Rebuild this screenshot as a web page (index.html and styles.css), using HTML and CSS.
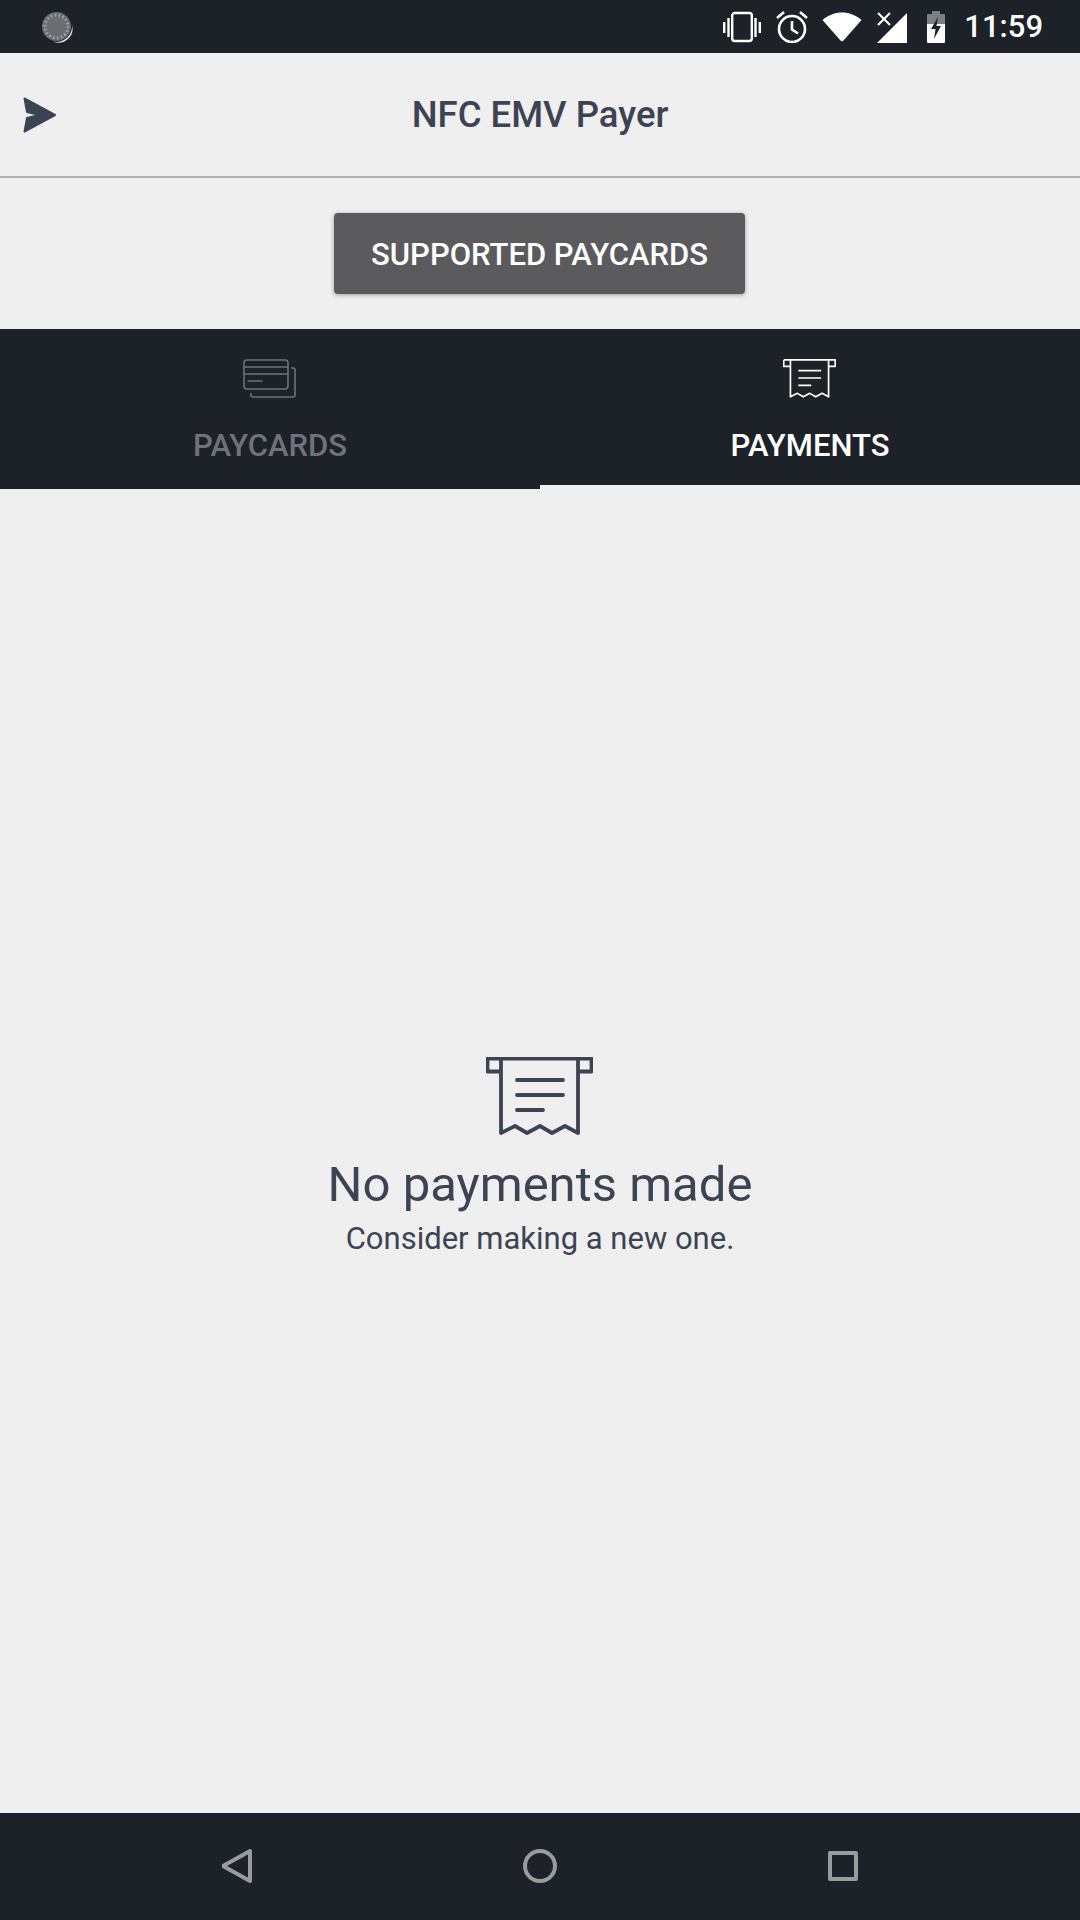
FILE: index.html
```html
<!DOCTYPE html>
<html lang="en">
<head>
  <meta charset="UTF-8">
  <meta name="viewport" content="width=device-width, initial-scale=1.0">
  <title>NFC EMV Payer</title>
  <link rel="stylesheet" href="styles.css">
</head>

<body>
  <div class="status-bar">
    <svg class="spinner" width="32" height="32" viewBox="0 0 32 32">
      <circle cx="15.5" cy="15.5" r="14.5" fill="#6b6d70"/>
      <circle cx="15.5" cy="15.5" r="11.5" fill="none" stroke="#a3a4a6" stroke-width="3" stroke-dasharray="1.6 2.4"/>
      <path d="M12 30.500 A 15.500 15.500 0 0 0 31 14 A 14 14 0 0 1 12 30.500 Z" fill="#e6e6e6"/>
    </svg>
    <div class="status-icons">
      <svg width="38" height="32" viewBox="0 0 38 32" fill="none" stroke="#fff" stroke-width="2.4">
        <rect x="9.200" y="2" width="19.600" height="28" rx="2.500"/>
        <path d="M1.200 11v11M5.500 7v19M32.500 7v19M36.800 11v11"/>
      </svg>
      <svg class="gap-alarm" width="32" height="32" viewBox="0 0 32 32" fill="none" stroke="#fff" stroke-width="2.6">
        <circle cx="16" cy="18" r="13"/>
        <path d="M16 10v8.500l6 4M1 7l7-6M31 7l-7-6"/>
      </svg>
      <svg class="gap-wifi" width="40" height="30" viewBox="0 0 40 30">
        <path d="M0.500 8 C12 -2 28 -2 39.500 8 L21.500 28.500 Q20 30 18.500 28.500 Z" fill="#fff"/>
      </svg>
      <svg class="gap-signal" width="30" height="32" viewBox="0 0 30 32">
        <path d="M30 2 V32 H0 Z" fill="#fff"/>
        <path d="M1 2l12 12M13 2L1 14" stroke="#fff" stroke-width="2" fill="none"/>
      </svg>
      <svg class="gap-battery" width="18" height="32" viewBox="0 0 18 32">
        <path d="M5 0h8v3h4a1 1 0 0 1 1 1v12H0V4a1 1 0 0 1 1-1h4Z" fill="#7d7f82"/>
        <path d="M0 13h18v18a1 1 0 0 1-1 1H1a1 1 0 0 1-1-1Z" fill="#fff"/>
        <path d="M11 6L4 18h4.500L7 28l7-13H9.500Z" fill="#1d2229"/>
      </svg>
      <span class="clock">11:59</span>
    </div>
  </div>

  <header class="app-header">
    <svg class="app-logo" width="34" height="36" viewBox="0 0 34 36">
      <path d="M1.500 1.500L32 18 1.500 34.500 4 21 16 18 4 15Z" fill="#3c4353" stroke="#3c4353" stroke-width="2" stroke-linejoin="round"/>
    </svg>
    <h1 class="app-title">NFC EMV Payer</h1>
  </header>

  <div class="action-row">
    <button class="btn-supported">SUPPORTED PAYCARDS</button>
  </div>

  <nav class="tabs">
    <div class="tab">
      <svg class="tab-icon" width="53" height="39" viewBox="0 0 53 39" fill="none" stroke="#6f7279" stroke-width="1.600">
        <rect x="1" y="1" width="44" height="29" rx="3"/>
        <path d="M1 8h44M1 15h44M4.500 22h15M48 9h2a2 2 0 0 1 2 2v25a2 2 0 0 1-2 2H10a2 2 0 0 1-2-2v-2"/>
      </svg>
      <span class="tab-label">PAYCARDS</span>
    </div>
    <div class="tab tab-active">
      <svg class="tab-icon" width="53" height="39" viewBox="0 0 107 78" fill="none" stroke="#fff" stroke-width="3.400" stroke-linejoin="round">
        <path d="M1.500 1.500h104v13h-13M15 14.500H1.500v-13M15 1.500V76l14-7 12 7 13-7 12 7 13-7 13 7V1.500"/>
        <path d="M31 23h46M31 38h46M31 53h26"/>
      </svg>
      <span class="tab-label">PAYMENTS</span>
    </div>
  </nav>

  <main class="empty-state">
    <svg class="empty-icon" width="107" height="78" viewBox="0 0 107 78" fill="none" stroke="#3c4353" stroke-width="3.800" stroke-linejoin="round" stroke-linecap="round">
      <path d="M1.500 1.500h104v13h-13M15 14.500H1.500v-13M15 1.500V76l14-7 12 7 13-7 12 7 13-7 13 7V1.500"/>
      <path d="M31 23h46M31 38h46M31 53h26"/>
    </svg>
    <h2 class="empty-title">No payments made</h2>
    <p class="empty-text">Consider making a new one.</p>
  </main>

  <div class="nav-bar">
    <svg width="30" height="34" viewBox="0 0 30 34" fill="none" stroke="#9a9b9d" stroke-width="4" stroke-linejoin="round">
      <path d="M28 2V32L1 17Z"/>
    </svg>
    <svg width="34" height="34" viewBox="0 0 34 34" fill="none" stroke="#9a9b9d" stroke-width="4">
      <circle cx="17" cy="17" r="15"/>
    </svg>
    <svg width="30" height="30" viewBox="0 0 30 30" fill="none" stroke="#9a9b9d" stroke-width="4" stroke-linejoin="round">
      <rect x="2" y="2" width="26" height="26"/>
    </svg>
  </div>
</body>
</html>
```

FILE: styles.css
```css
* {
  box-sizing: border-box;
}

html, body {
  height: 100%;
}

body {
  display: flex;
  flex-direction: column;
  height: 1920px;
  margin: 0;
  background-color: #efefef;
  font-family: Roboto, sans-serif;
  overflow: hidden;
}

svg {
  display: block;
  flex-shrink: 0;
}

.status-bar {
  display: flex;
  align-items: center;
  justify-content: space-between;
  height: 53px;
  padding: 0 37px 0 41px;
  background-color: #1d2229;
}

.status-icons {
  display: flex;
  align-items: center;
}

.gap-alarm {
  margin-left: 15px;
}

.gap-wifi {
  margin-left: 14px;
}

.gap-signal {
  margin-left: 15px;
}

.gap-battery {
  margin-left: 20px;
}

.clock {
  margin-left: 19px;
  color: #fff;
  font-size: 31px;
  font-weight: 500;
}

.app-header {
  display: grid;
  grid-template-columns: 34px 1fr 34px;
  align-items: center;
  height: 125px;
  padding: 0 23px;
  border-bottom: 2px solid #b0b0b0;
}

.app-title {
  margin: 0;
  color: #3c4353;
  font-size: 36.5px;
  font-weight: 500;
  text-align: center;
}

.action-row {
  display: flex;
  justify-content: center;
  height: 151px;
  padding-top: 35px;
}

.btn-supported {
  width: 411px;
  height: 81px;
  margin-right: 1px;
  padding: 2px 0 0;
  border: none;
  border-radius: 4px;
  background-color: #5b5b5d;
  box-shadow: 0 1px 4px rgba(0, 0, 0, 0.35);
  color: #fff;
  font-family: Roboto, sans-serif;
  font-size: 31px;
  font-weight: 500;
}

.tabs {
  display: flex;
  height: 160px;
}

.tab {
  display: flex;
  flex: 1;
  flex-direction: column;
  align-items: center;
  padding-top: 30px;
  background-color: #1d2229;
  color: #6f7279;
}

.tab-active {
  border-bottom: 4px solid #efefef;
  color: #fff;
}

.tab-icon {
  margin-right: 2px;
}

.tab-label {
  margin-top: 29px;
  font-size: 31px;
  font-weight: 500;
}

.empty-state {
  display: flex;
  flex: 1;
  flex-direction: column;
  align-items: center;
  justify-content: center;
  padding-top: 12px;
  color: #3c4353;
}

.empty-icon {
  margin-right: 2px;
}

.empty-title {
  margin: 21px 0 0;
  font-size: 49px;
  font-weight: 400;
}

.empty-text {
  margin: 7px 0 0;
  font-size: 31px;
}

.nav-bar {
  display: flex;
  align-items: center;
  justify-content: center;
  gap: 271px;
  height: 107px;
  padding-bottom: 2px;
  background-color: #1d2229;
}
```
